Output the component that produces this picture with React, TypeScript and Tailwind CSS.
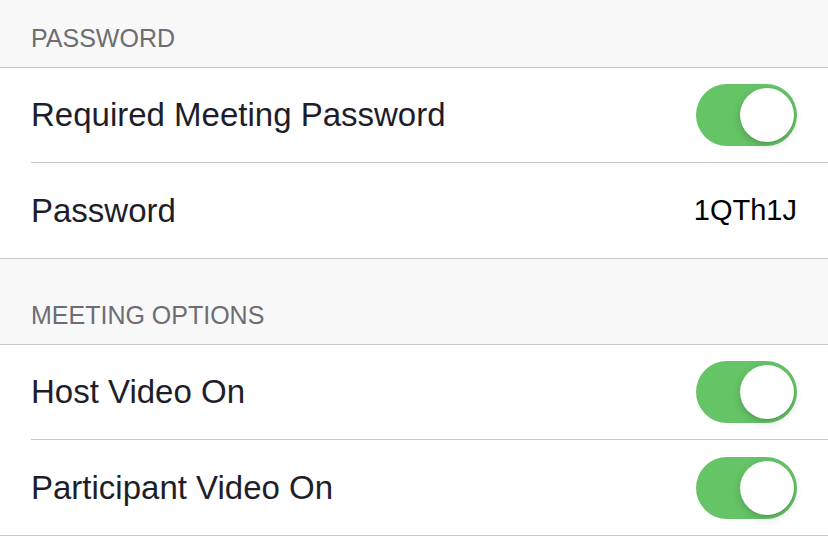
import React from 'react';

const font = { fontFamily: '"Liberation Sans", Arial, sans-serif' };

function Toggle() {
    return (
        <div className="relative w-[101px] h-[62px] rounded-full bg-[#65c466]">
            <div className="absolute right-[3px] top-[4px] w-[54px] h-[54px] rounded-full bg-white shadow-[0_3px_8px_rgba(0,0,0,0.18),0_1px_1px_rgba(0,0,0,0.1)]" />
        </div>
    );
}

function SectionHeader({ title, height }: { title: string; height: string }) {
    return (
        <div className={`${height} bg-[#f8f8f8] border-b border-[#c8c7cc] flex items-end pl-[31px] pb-[16px]`}>
            <span className="text-[25px] leading-none text-[#6d6d72] uppercase">{title}</span>
        </div>
    );
}

function Row({ label, last, children }: { label: string; last?: boolean; children: React.ReactNode }) {
    return (
        <div className={`bg-white pl-[31px] ${last ? 'border-b border-[#c8c7cc]' : ''}`}>
            <div className={`h-[95px] flex items-center justify-between pr-[31px] ${last ? '' : 'border-b border-[#c8c7cc]'}`}>
                <span className="text-[33px] text-[#1e1e2a]">{label}</span>
                {children}
            </div>
        </div>
    );
}

export default function App() {
    return (
        <div className="w-[828px] h-[536px] bg-[#f8f8f8] overflow-hidden" style={font}>
            <SectionHeader title="Password" height="h-[68px]" />
            <Row label="Required Meeting Password">
                <Toggle />
            </Row>
            <Row label="Password" last>
                <span className="text-[29px] text-black">1QTh1J</span>
            </Row>
            <SectionHeader title="Meeting Options" height="h-[86px]" />
            <Row label="Host Video On">
                <Toggle />
            </Row>
            <Row label="Participant Video On" last>
                <Toggle />
            </Row>
        </div>
    );
}
